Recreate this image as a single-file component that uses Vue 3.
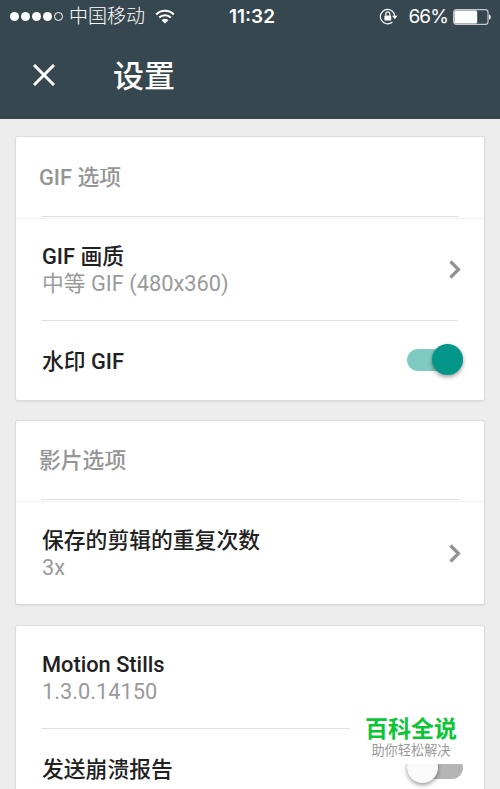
<template>
  <div class="screen">
    <header class="top">
      <div class="status">
        <div class="carrier">
          <div class="signal">
            <span v-for="n in 5" :key="n" class="dot" :class="{ empty: n > 4 }"></span>
          </div>
          <span class="carrier-name">中国移动</span>
          <svg class="wifi" width="20" height="15" viewBox="0 0 20 15">
            <path d="M1.2 5.4a12.4 12.4 0 0 1 17.6 0" />
            <path d="M4.2 8.6a8.2 8.2 0 0 1 11.6 0" />
            <path class="wifi-base" d="M6.6 11.2a4.8 4.8 0 0 1 6.8 0L10 14.4z" />
          </svg>
        </div>
        <span class="time">11:32</span>
        <div class="power">
          <svg class="lock" width="19" height="17" viewBox="0 0 19 17">
            <path class="ring" d="M13.4 14a7.2 7.2 0 1 1 2.4-5.7" />
            <path d="M13 7.8h5.6l-2.8 3.4z" />
            <rect x="5.4" y="7.4" width="6.8" height="5" rx=".6" />
            <path class="ring" d="M6.8 7.6V5.8a2 2 0 0 1 4 0v1.8" />
          </svg>
          <span class="percent">66%</span>
          <svg class="battery" width="38" height="16" viewBox="0 0 38 16">
            <rect class="shell" x=".6" y=".6" width="34.4" height="14.8" rx="2.6" />
            <rect x="1.4" y="1.4" width="22.8" height="13.2" rx="1.6" />
            <path d="M36 5.3c2.3.6 2.3 4.8 0 5.4z" />
          </svg>
        </div>
      </div>
      <div class="toolbar">
        <svg class="close" width="22" height="22" viewBox="0 0 22 22">
          <path d="M1 1l20 20M21 1L1 21" />
        </svg>
        <h1>设置</h1>
      </div>
    </header>

    <main>
      <section v-for="(card, i) in cards" :key="i" class="card">
        <div v-if="card.header" class="card-header">
          <span>{{ card.header }}</span>
        </div>
        <div
          v-for="row in card.rows"
          :key="row.title"
          class="row"
          :class="{ single: !row.value }"
          @click="toggle(row)"
        >
          <div class="labels">
            <div class="title">{{ row.title }}</div>
            <div v-if="row.value" class="value">{{ row.value }}</div>
          </div>
          <svg v-if="row.link" class="chevron" width="12" height="19" viewBox="0 0 12 19">
            <path d="M1.5 1.5l8 8-8 8" />
          </svg>
          <div v-if="'on' in row" class="switch" :class="{ on: row.on }">
            <span class="knob"></span>
          </div>
        </div>
      </section>
    </main>

    <div class="stamp">
      <div class="stamp-name">百科全说</div>
      <div class="stamp-text">助你轻松解决</div>
    </div>
  </div>
</template>

<script setup>
import { reactive } from 'vue'

const cards = reactive([
  {
    header: 'GIF 选项',
    rows: [
      { title: 'GIF 画质', value: '中等 GIF (480x360)', link: true },
      { title: '水印 GIF', on: true }
    ]
  },
  {
    header: '影片选项',
    rows: [
      { title: '保存的剪辑的重复次数', value: '3x', link: true }
    ]
  },
  {
    rows: [
      { title: 'Motion Stills', value: '1.3.0.14150' },
      { title: '发送崩溃报告', on: false }
    ]
  }
])

const toggle = (row) => {
  if ('on' in row) row.on = !row.on
}
</script>

<style>
body {
  margin: 0;
  background: #ededed;
}
</style>

<style scoped>
.screen {
  position: relative;
  height: 789px;
  overflow: hidden;
  background: #ededed;
  font-family: Roboto, "Noto Sans CJK SC", sans-serif;
}

/* HEADER */
.top {
  height: 119px;
  background: #37474f;
  color: white;
}

.status {
  display: grid;
  grid-template-columns: 1fr auto 1fr;
  align-items: center;
  height: 32px;
  padding: 0 9px 0 10px;
  font-family: Inter, "Noto Sans CJK SC", sans-serif;
}

.carrier,
.power,
.signal {
  display: flex;
  align-items: center;
}

.signal {
  gap: 2px;
}

.dot {
  box-sizing: border-box;
  width: 9px;
  height: 9px;
  border-radius: 50%;
  background: white;
}

.dot.empty {
  background: none;
  border: 1px solid white;
}

.carrier-name {
  margin: 1px 10px 0 6px;
  font-size: 19px;
  font-weight: 300;
  line-height: 32px;
}

.wifi path {
  fill: none;
  stroke: white;
  stroke-width: 2.1;
}

.wifi .wifi-base {
  fill: white;
  stroke: none;
}

.time {
  margin-left: 3px;
  font-size: 19px;
  font-weight: 600;
}

.power {
  justify-content: flex-end;
}

.power svg {
  fill: white;
}

.lock {
  margin-right: 10px;
}

.lock .ring {
  fill: none;
  stroke: white;
  stroke-width: 1.2;
}

.percent {
  margin-right: 5px;
  font-size: 19px;
  letter-spacing: -0.9px;
}

.battery .shell {
  fill: none;
  stroke: #c3c8ca;
  stroke-width: 1.2;
}

.toolbar {
  display: flex;
  align-items: center;
  height: 86px;
  padding-left: 33px;
}

.close {
  fill: none;
  stroke: white;
  stroke-width: 3;
}

h1 {
  margin: 3px 0 0 58px;
  font-size: 31px;
  font-weight: 500;
  line-height: 40px;
}

/* CARDS */
main {
  display: flex;
  flex-direction: column;
  gap: 21px;
  padding: 18px 16px 0;
}

.card {
  background: white;
  border-radius: 2px;
  box-shadow: 0 0 1px 1px #dcdcdc, 0 1px 2px #bbb;
}

.card:last-child {
  margin-top: 1px;
}

.card-header {
  height: 80px;
  padding: 0 25px 0 23px;
  border-bottom: 1px solid #f0f0f0;
  color: #959595;
  font-size: 21.8px;
  font-weight: 500;
  line-height: 80px;
}

.card-header::after {
  content: "";
  display: block;
  height: 1px;
  margin: -2px 0 0 2px;
  background: #e0e0e0;
}

.card:first-child .card-header {
  height: 81px;
  line-height: 81px;
}

.row {
  display: flex;
  align-items: center;
  justify-content: space-between;
  box-sizing: border-box;
  height: 102px;
  margin: 0 26px 0 25px;
}

.card:first-child .row:not(.single) {
  height: 101px;
}

.row + .row {
  border-top: 1px solid #e0e0e0;
}

.row.single {
  height: 80px;
}

.labels {
  padding: 1px 0 0 1px;
  font-size: 21.8px;
  line-height: 27px;
}

.title {
  color: #212121;
  font-weight: 500;
}

.value {
  color: #9a9a9a;
}

.chevron {
  margin-right: -3px;
  fill: none;
  stroke: #929292;
  stroke-width: 3.2;
}

/* SWITCH */
.switch {
  display: flex;
  align-items: center;
  width: 56px;
  height: 22px;
  margin: -2px -5px 0 0;
  border-radius: 11px;
  background: #b5b5b5;
}

.knob {
  width: 31px;
  height: 31px;
  border-radius: 50%;
  background: #fafafa;
  box-shadow: 0 2px 4px rgba(0, 0, 0, 0.4);
}

.switch.on {
  justify-content: flex-end;
  background: #7fcbc2;
}

.switch.on .knob {
  background: #049688;
}

/* STAMP */
.stamp {
  position: absolute;
  left: 350px;
  top: 708px;
  width: 122px;
  height: 56px;
  background: white;
  text-align: center;
  white-space: nowrap;
}

.stamp-name {
  margin-top: 9px;
  color: #0bc537;
  font-size: 23px;
  font-weight: 700;
  line-height: 25px;
}

.stamp-text {
  color: #999;
  font-size: 13.2px;
  line-height: 18px;
}
</style>
